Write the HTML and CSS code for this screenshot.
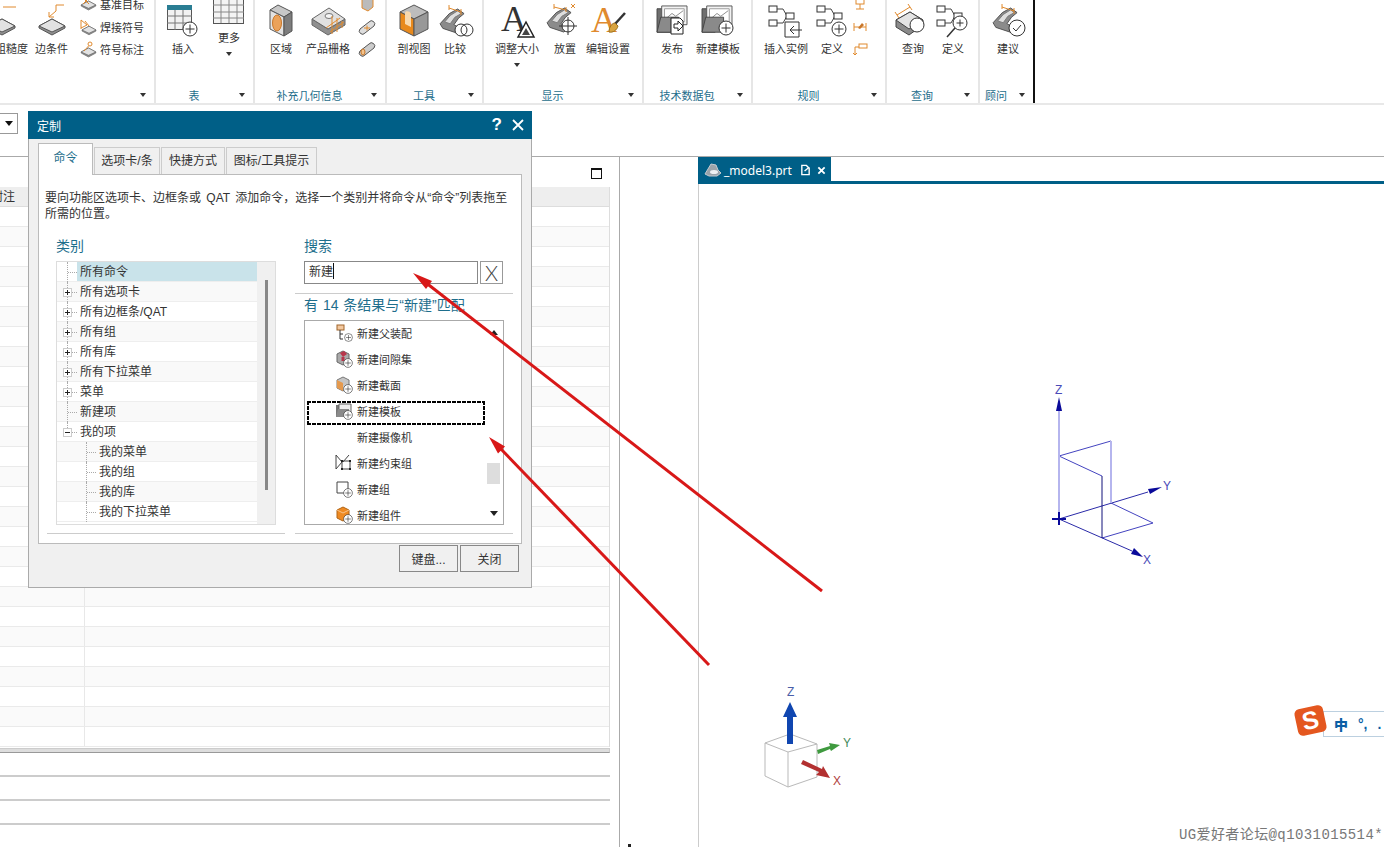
FILE: index.html
```html
<!DOCTYPE html>
<html lang="zh-CN">
<head>
    <meta charset="UTF-8">
    <title>定制 - NX</title>
    <link rel="stylesheet" href="styles.css">
</head>
<body>
<svg class="defs" width="0" height="0">
    <symbol id="plate" viewBox="0 0 26 16" overflow="visible">
        <path d="M0 7 13 0 26 7 26 9 13 16 0 9Z" fill="#8f8f8f" stroke="#555"/>
        <path d="M0 7 13 0 26 7 13 13Z" fill="#e2e2e2" stroke="#555"/>
    </symbol>
    <symbol id="plus" viewBox="0 0 16 16">
        <circle cx="8" cy="8" r="7" fill="#fff" stroke="#333"/>
        <path d="M8 3.500v9M3.500 8h9" stroke="#333"/>
    </symbol>
    <symbol id="bracket" viewBox="0 0 30 26" overflow="visible">
        <path d="M1 16 11 5 20 0 27 5 21 10 16 17 25 22 19 26 4 21Z" fill="#8b8b8b" stroke="#4d4d4d"/>
        <path d="M12 7 20 2 24 5 17 9 12 16 6 14Z" fill="#dedede" stroke="#777"/>
    </symbol>
    <symbol id="folder" viewBox="0 0 34 32">
        <path d="M1 4h8l2 3h4v22H1Z" fill="#6f6f6f" stroke="#444"/>
        <path d="M6 1h27v20H6Z" fill="#f2f2f2" stroke="#555"/>
        <path d="M9 4h21v14H9Z" fill="#fff" stroke="#999"/>
        <path d="M10 15 17 9 21 12 29 6" fill="none" stroke="#888"/>
        <path d="M1 29 5 13H24V29Z" fill="#8a8a8a" stroke="#444"/>
    </symbol>
    <symbol id="nodes" viewBox="0 0 32 30">
        <path d="M8 4h7l4 7h3M8 18h7l4-7" fill="none" stroke="#444"/>
        <rect x="1" y="1" width="8" height="6" fill="#fff" stroke="#333"/>
        <rect x="1" y="15" width="8" height="6" fill="#fff" stroke="#333"/>
        <rect x="18" y="8" width="8" height="6" fill="#fff" stroke="#333"/>
    </symbol>
</svg>

<div class="app">
    <div class="ribbon">
        <div class="rgroup g1">
            <div class="rtools">
                <div class="tool w23">
                    <svg class="ico" viewBox="0 0 40 40"><path d="M11 6h13" stroke="#e08a2e" fill="none"/><use href="#plate" x="-3" y="18" width="26" height="16"/></svg>
                    <span>粗糙度</span>
                </div>
                <div class="tool w57">
                    <svg class="ico" viewBox="0 0 40 40"><use href="#plate" x="7" y="18" width="26" height="16"/><path d="M32 4H24V10M24 10 17 16M17 11V16H22" stroke="#e08a2e" fill="none"/></svg>
                    <span>边条件</span>
                </div>
                <div class="smallcol">
                    <div class="smallitem"><svg class="sico" viewBox="0 0 16 16"><use href="#plate" x="1" y="5" width="15" height="9"/><path d="M3 2 9 8M9 2 3 8" stroke="#e08a2e"/></svg><span>基准目标</span></div>
                    <div class="smallitem"><svg class="sico" viewBox="0 0 16 16"><use href="#plate" x="2" y="7" width="14" height="9"/><path d="M1 1v9M1 1l6 5-6 3M5 2l4 5" stroke="#e08a2e" fill="none"/></svg><span>焊接符号</span></div>
                    <div class="smallitem"><svg class="sico" viewBox="0 0 16 16"><use href="#plate" x="1" y="7" width="15" height="9"/><circle cx="10" cy="3" r="2" fill="none" stroke="#e08a2e"/><path d="M8.500 5 4 10" stroke="#e08a2e"/></svg><span>符号标注</span></div>
                </div>
            </div>
            <div class="rfoot"><span class="rlabel"></span><i class="rarrow"></i></div>
        </div>

        <div class="rgroup g2">
            <div class="rtools">
                <div class="tool w46">
                    <svg class="ico" viewBox="0 0 40 40">
                        <rect x="4.500" y="4.500" width="24" height="24" fill="#f2f2f2" stroke="#555"/>
                        <rect x="4" y="4" width="25" height="5" fill="#2a7d93"/>
                        <path d="M4 15h25M4 22h25M12 9v20M20 9v20" stroke="#777"/>
                        <use href="#plus" x="19" y="20" width="16" height="16"/>
                    </svg>
                    <span>插入</span>
                </div>
                <div class="tool w46 more">
                    <svg class="ico ico-more" viewBox="0 0 40 30">
                        <rect x="4.500" y="-5" width="30" height="28.500" fill="#f4f4f4" stroke="#555"/>
                        <path d="M4 5h31M4 12h31M4 18h31M12 -5v28M20 -5v28M28 -5v28" stroke="#888"/>
                    </svg>
                    <span>更多</span>
                    <i class="rarrow"></i>
                </div>
            </div>
            <div class="rfoot"><span class="rlabel">表</span><i class="rarrow"></i></div>
        </div>

        <div class="rgroup g3">
            <div class="rtools">
                <div class="tool w46">
                    <svg class="ico" viewBox="0 0 40 40">
                        <path d="M9 9 17 4 31 11 23 16Z" fill="#c8c8c8" stroke="#555"/>
                        <path d="M9 9 23 16V35L9 28Z" fill="#e2e2e2" stroke="#555"/>
                        <path d="M23 16 31 11V30L23 35Z" fill="#7d7d7d" stroke="#555"/>
                        <ellipse cx="16" cy="22" rx="4.500" ry="8" fill="#eba25a" stroke="#c9772a"/>
                    </svg>
                    <span>区域</span>
                </div>
                <div class="tool w48">
                    <svg class="ico" viewBox="0 0 40 40">
                        <path d="M4 18V24L20 34 37 24V18L20 28Z" fill="#8f8f8f" stroke="#666"/>
                        <path d="M4 18 21 7 37 18 20 28Z" fill="#e0e0e0" stroke="#666"/>
                        <ellipse cx="21" cy="15" rx="4" ry="2.500" fill="#f5f5f5" stroke="#777"/>
                        <path d="M18 27 32 17M22 31 36 21M24 15V33M29 17V31M34 20V27" stroke="#e08a2e" fill="none"/>
                    </svg>
                    <span>产品栅格</span>
                </div>
                <div class="smallcol w30 iconly">
                    <div class="smallitem"><svg class="sico" viewBox="0 0 16 16"><path d="M3 3 9 0 14 3V11L9 15 3 12Z" fill="#bbb" stroke="#e08a2e"/></svg></div>
                    <div class="smallitem"><svg class="sico" viewBox="0 0 16 16"><path d="M1 10 10 3a3 3 0 0 1 5 4L6 14a3 3 0 0 1-5-4Z" fill="#ddd" stroke="#555"/><path d="M5 9h6M8 6.500v5" stroke="#e08a2e"/></svg></div>
                    <div class="smallitem"><svg class="sico" viewBox="0 0 16 16"><path d="M1 10 10 3a3 3 0 0 1 5 4L6 14a3 3 0 0 1-5-4Z" fill="#ccc" stroke="#555"/><ellipse cx="4" cy="11" rx="2" ry="3" fill="#f4c48c" stroke="#c9772a"/></svg></div>
                </div>
            </div>
            <div class="rfoot"><span class="rlabel">补充几何信息</span><i class="rarrow"></i></div>
        </div>

        <div class="rgroup g4">
            <div class="rtools">
                <div class="tool w48">
                    <svg class="ico" viewBox="0 0 40 40">
                        <path d="M6 11 20 4 34 11 20 18Z" fill="#bdbdbd" stroke="#555"/>
                        <path d="M6 11 20 18V35L6 28Z" fill="#e8891c" stroke="#555"/>
                        <path d="M20 18 34 11V28L20 35Z" fill="#989898" stroke="#555"/>
                        <path d="M11 12c0-3 6-2 6 1V26L11 23Z" fill="#f8d9ae"/>
                    </svg>
                    <span>剖视图</span>
                </div>
                <div class="tool w34">
                    <svg class="ico" viewBox="0 0 40 40">
                        <use href="#bracket" x="4" y="8" width="28" height="24"/>
                        <path d="M14 7 26 11M14 4V9M26 8V14" stroke="#e08a2e" fill="none"/>
                        <circle cx="26" cy="29" r="6" fill="#fff" stroke="#333"/>
                        <circle cx="32" cy="29" r="6" fill="none" stroke="#333"/>
                    </svg>
                    <span>比较</span>
                </div>
            </div>
            <div class="rfoot"><span class="rlabel">工具</span><i class="rarrow"></i></div>
        </div>

        <div class="rgroup g5">
            <div class="rtools">
                <div class="tool w50">
                    <svg class="ico" viewBox="0 0 40 40">
                        <text x="4" y="30" class="ico-a">A</text>
                        <path d="M29 21 37 36H21Z" fill="#fff" stroke="#222" stroke-width="1.500"/>
                        <path d="M29 27 33 34H25Z" fill="#444"/>
                    </svg>
                    <span>调整大小</span>
                    <i class="rarrow"></i>
                </div>
                <div class="tool w46">
                    <svg class="ico" viewBox="0 0 40 40">
                        <use href="#bracket" x="1" y="7" width="28" height="24"/>
                        <path d="M9 6 21 9M9 3V8M21 6V11M26 3l4 4M30 3l-4 4" stroke="#e08a2e" fill="none"/>
                        <circle cx="23" cy="25" r="6" fill="#fff" stroke="#333"/>
                        <path d="M23 16V34M14 25H32" stroke="#333"/>
                    </svg>
                    <span>放置</span>
                </div>
                <div class="tool w40">
                    <svg class="ico" viewBox="0 0 40 40">
                        <text x="3" y="31" class="ico-a orange">A</text>
                        <path d="M37 12 27 23" stroke="#333" stroke-width="2.500"/>
                        <path d="M27 22c-3 0-6 4-6 9 4 1 8-2 9-6Z" fill="#d9a441" stroke="#9b6e1c"/>
                    </svg>
                    <span>编辑设置</span>
                </div>
            </div>
            <div class="rfoot"><span class="rlabel">显示</span><i class="rarrow"></i></div>
        </div>

        <div class="rgroup g6">
            <div class="rtools">
                <div class="tool w46">
                    <svg class="ico" viewBox="0 0 40 40">
                        <use href="#folder" x="3" y="4" width="34" height="30"/>
                        <path d="M19 17h9l3 3v13H19Z" fill="#fff" stroke="#222"/>
                        <path d="M22 23h4v-3l5 5-5 5v-3h-4Z" fill="#fff" stroke="#222"/>
                    </svg>
                    <span>发布</span>
                </div>
                <div class="tool w46">
                    <svg class="ico" viewBox="0 0 40 40">
                        <use href="#folder" x="2" y="4" width="34" height="30"/>
                        <use href="#plus" x="20" y="19" width="16" height="16"/>
                    </svg>
                    <span>新建模板</span>
                </div>
            </div>
            <div class="rfoot"><span class="rlabel">技术数据包</span><i class="rarrow"></i></div>
        </div>

        <div class="rgroup g7">
            <div class="rtools">
                <div class="tool w50">
                    <svg class="ico" viewBox="0 0 40 40">
                        <use href="#nodes" x="2" y="4" width="32" height="30"/>
                        <path d="M19 21h14v15H19Z" fill="#fff" stroke="#333"/>
                        <path d="M36 29H24M28 25l-4 4 4 4" fill="none" stroke="#333"/>
                    </svg>
                    <span>插入实例</span>
                </div>
                <div class="tool w42">
                    <svg class="ico" viewBox="0 0 40 40">
                        <use href="#nodes" x="4" y="4" width="32" height="30"/>
                        <use href="#plus" x="19" y="20" width="16" height="16"/>
                    </svg>
                    <span>定义</span>
                </div>
                <div class="smallcol w14 iconly">
                    <div class="smallitem"><svg class="sico" viewBox="0 0 16 16"><rect x="4" y="1" width="8" height="7" fill="#fff" stroke="#e08a2e"/><path d="M8 8v5M4 13h8" stroke="#e08a2e"/></svg></div>
                    <div class="smallitem"><svg class="sico" viewBox="0 0 16 16"><path d="M2 4v8M14 4v8M2 8h12" stroke="#e08a2e"/><path d="M6 9 10 4 12 6 8 10Z" fill="#c9772a"/></svg></div>
                    <div class="smallitem"><svg class="sico" viewBox="0 0 16 16"><path d="M3 14V6H7M3 14l-2-2M3 14l2-2" stroke="#e08a2e" fill="none"/><rect x="7" y="3" width="8" height="4" fill="#fff" stroke="#e08a2e"/></svg></div>
                </div>
            </div>
            <div class="rfoot"><span class="rlabel">规则</span><i class="rarrow"></i></div>
        </div>

        <div class="rgroup g8">
            <div class="rtools">
                <div class="tool w40">
                    <svg class="ico" viewBox="0 0 40 40">
                        <path d="M3 19 17 11 30 19V24L16 34 3 26Z" fill="#8a8a8a" stroke="#444"/>
                        <path d="M3 19 17 11 30 19 16 28Z" fill="#e4e4e4" stroke="#444"/>
                        <path d="M4 14 17 6M2 11l4 6M15 3l4 6" stroke="#e08a2e" fill="none"/>
                        <circle cx="24" cy="24" r="7" fill="#fff" stroke="#333"/>
                    </svg>
                    <span>查询</span>
                </div>
                <div class="tool w40">
                    <svg class="ico" viewBox="0 0 40 40">
                        <use href="#nodes" x="3" y="4" width="32" height="30"/>
                        <circle cx="27" cy="22" r="7" fill="#fff" stroke="#333"/>
                        <path d="M27 18.500v7M23.500 22h7" stroke="#333"/>
                        <path d="M22 27 14 36" stroke="#333" stroke-width="1.500"/>
                    </svg>
                    <span>定义</span>
                </div>
            </div>
            <div class="rfoot"><span class="rlabel">查询</span><i class="rarrow"></i></div>
        </div>

        <div class="rgroup g9">
            <div class="rtools">
                <div class="tool w40">
                    <svg class="ico" viewBox="0 0 40 40">
                        <use href="#bracket" x="4" y="7" width="28" height="24"/>
                        <path d="M14 6 26 10M14 3V8M26 7V13" stroke="#e08a2e" fill="none"/>
                        <circle cx="29" cy="27" r="8" fill="#fff" stroke="#333"/>
                        <path d="M25 27l3 3 5-6" fill="none" stroke="#333"/>
                    </svg>
                    <span>建议</span>
                </div>
            </div>
            <div class="rfoot"><span class="rlabel">顾问</span><i class="rarrow"></i></div>
        </div>
    </div>

    <div class="strip">
        <div class="combo"><i class="rarrow"></i></div>
    </div>

    <div class="main">
        <div class="panel">
            <div class="panel-head"><span class="maxbox"></span></div>
            <div class="thead"><span class="th-note">附注</span></div>
            <div class="tbody">
                <div class="trow"><i></i></div><div class="trow"><i></i></div><div class="trow"><i></i></div>
                <div class="trow"><i></i></div><div class="trow"><i></i></div><div class="trow"><i></i></div>
                <div class="trow"><i></i></div><div class="trow"><i></i></div><div class="trow"><i></i></div>
                <div class="trow"><i></i></div><div class="trow"><i></i></div><div class="trow"><i></i></div>
                <div class="trow"><i></i></div><div class="trow"><i></i></div><div class="trow"><i></i></div>
                <div class="trow"><i></i></div><div class="trow"><i></i></div><div class="trow"><i></i></div>
                <div class="trow"><i></i></div><div class="trow"><i></i></div><div class="trow"><i></i></div>
                <div class="trow"><i></i></div><div class="trow"><i></i></div><div class="trow"><i></i></div>
                <div class="trow"><i></i></div><div class="trow"><i></i></div><div class="trow"><i></i></div>
            </div>
            <div class="splitter"></div>
            <div class="slot"></div>
            <div class="slot"></div>
            <div class="slot"></div>
        </div>
        <div class="gutter"></div>
        <div class="view">
            <div class="tabbar">
                <div class="parttab">
                    <svg class="parttab-ico" viewBox="0 0 18 16"><path d="M1 12 7 2 12 3 14 8 17 11 13 14H5Z" fill="#9aa3aa" stroke="#c4cad0"/><ellipse cx="10" cy="10" rx="4" ry="2" fill="#eef1f3"/></svg>
                    <span>_model3.prt</span>
                    <svg class="parttab-doc" viewBox="0 0 12 12"><path d="M2 1h5l3 3v7H2Z" fill="none" stroke="#fff" stroke-width="1.500"/><path d="M5 7l5-4" stroke="#fff" stroke-width="1.500"/></svg>
                    <svg class="parttab-x" viewBox="0 0 10 10"><path d="M1.500 1.500l7 7M8.500 1.500l-7 7" stroke="#fff" stroke-width="2"/></svg>
                </div>
            </div>
            <div class="viewbody"></div>
        </div>
    </div>

    <div class="dialog">
        <div class="dlg-title">
            <span class="dlg-name">定制</span>
            <span class="dlg-help">?</span>
            <svg class="dlg-x" viewBox="0 0 12 12"><path d="M1 1l10 10M11 1 1 11" stroke="#fff" stroke-width="1.800"/></svg>
        </div>
        <div class="dlg-body">
            <div class="tabs">
                <div class="tab active t55">命令</div>
                <div class="tab t66">选项卡/条</div>
                <div class="tab t64">快捷方式</div>
                <div class="tab t91">图标/工具提示</div>
            </div>
            <div class="pane">
                <p class="desc">要向功能区选项卡、边框条或 QAT 添加命令，选择一个类别并将命令从“命令”列表拖至<br>所需的位置。</p>
                <div class="cols">
                    <div class="col col-left">
                        <div class="col-label">类别</div>
                        <div class="tree">
                            <div class="tree-rows">
                                <div class="node selected"><span class="twig"></span><span class="node-text">所有命令</span></div>
                                <div class="node"><span class="twig"><svg class="exp" viewBox="0 0 9 9"><rect x=".5" y=".5" width="8" height="8" fill="#fff" stroke="#ccc"/><path d="M2 4.500h5M4.500 2v5" stroke="#222"/></svg></span><span class="node-text">所有选项卡</span></div>
                                <div class="node"><span class="twig"><svg class="exp" viewBox="0 0 9 9"><rect x=".5" y=".5" width="8" height="8" fill="#fff" stroke="#ccc"/><path d="M2 4.500h5M4.500 2v5" stroke="#222"/></svg></span><span class="node-text">所有边框条/QAT</span></div>
                                <div class="node"><span class="twig"><svg class="exp" viewBox="0 0 9 9"><rect x=".5" y=".5" width="8" height="8" fill="#fff" stroke="#ccc"/><path d="M2 4.500h5M4.500 2v5" stroke="#222"/></svg></span><span class="node-text">所有组</span></div>
                                <div class="node"><span class="twig"><svg class="exp" viewBox="0 0 9 9"><rect x=".5" y=".5" width="8" height="8" fill="#fff" stroke="#ccc"/><path d="M2 4.500h5M4.500 2v5" stroke="#222"/></svg></span><span class="node-text">所有库</span></div>
                                <div class="node"><span class="twig"><svg class="exp" viewBox="0 0 9 9"><rect x=".5" y=".5" width="8" height="8" fill="#fff" stroke="#ccc"/><path d="M2 4.500h5M4.500 2v5" stroke="#222"/></svg></span><span class="node-text">所有下拉菜单</span></div>
                                <div class="node"><span class="twig"><svg class="exp" viewBox="0 0 9 9"><rect x=".5" y=".5" width="8" height="8" fill="#fff" stroke="#ccc"/><path d="M2 4.500h5M4.500 2v5" stroke="#222"/></svg></span><span class="node-text">菜单</span></div>
                                <div class="node"><span class="twig"></span><span class="node-text">新建项</span></div>
                                <div class="node"><span class="twig twig-end"><svg class="exp" viewBox="0 0 9 9"><rect x=".5" y=".5" width="8" height="8" fill="#fff" stroke="#ccc"/><path d="M2 4.500h5" stroke="#222"/></svg></span><span class="node-text">我的项</span></div>
                                <div class="node sub"><span class="twig"></span><span class="node-text">我的菜单</span></div>
                                <div class="node sub"><span class="twig"></span><span class="node-text">我的组</span></div>
                                <div class="node sub"><span class="twig"></span><span class="node-text">我的库</span></div>
                                <div class="node sub"><span class="twig"></span><span class="node-text">我的下拉菜单</span></div>
                            </div>
                            <div class="tree-scroll"><div class="tree-thumb"></div></div>
                        </div>
                    </div>
                    <div class="col col-right">
                        <div class="col-label">搜索</div>
                        <div class="search">
                            <div class="search-input">新建<i class="caret"></i></div>
                            <div class="search-x">X</div>
                        </div>
                        <div class="rule"></div>
                        <div class="col-label result">有 14 条结果与“新建”匹配</div>
                        <div class="results">
                            <div class="result-rows">
                                <div class="item">
                                    <svg class="item-ico" viewBox="0 0 18 18"><rect x="2" y="1" width="7" height="5" fill="#f3c9a0" stroke="#a0652a"/><path d="M5 6v9h3M5 10h3" fill="none" stroke="#333"/><use href="#plus" x="9" y="9" width="9" height="9"/></svg>
                                    <span>新建父装配</span>
                                </div>
                                <div class="item">
                                    <svg class="item-ico" viewBox="0 0 18 18"><path d="M2 4 8 1 14 4V12L8 15 2 12Z" fill="#aaa" stroke="#666"/><path d="M5 3 9 1 12 4 8 7Z" fill="#b8354a"/><path d="M8 7V11" stroke="#b8354a" stroke-width="3"/><use href="#plus" x="8" y="8" width="10" height="10"/></svg>
                                    <span>新建间隙集</span>
                                </div>
                                <div class="item">
                                    <svg class="item-ico" viewBox="0 0 18 18"><path d="M2 4 8 1 14 4V12L8 15 2 12Z" fill="#c5c5c5" stroke="#777"/><path d="M2 4 8 7V15L2 12Z" fill="#e59a4e"/><use href="#plus" x="8" y="8" width="10" height="10"/></svg>
                                    <span>新建截面</span>
                                </div>
                                <div class="item focus">
                                    <svg class="item-ico" viewBox="0 0 18 18"><path d="M1 3h4l1 2H1ZM1 5h6v10H1Z" fill="#777"/><path d="M4 2h12v10H4Z" fill="#eee" stroke="#666"/><path d="M1 15 3 7H14V15Z" fill="#8a8a8a"/><use href="#plus" x="8" y="8" width="10" height="10"/></svg>
                                    <span>新建模板</span>
                                </div>
                                <div class="item">
                                    <span class="item-ico"></span>
                                    <span>新建摄像机</span>
                                </div>
                                <div class="item">
                                    <svg class="item-ico" viewBox="0 0 18 18"><path d="M1 1 7 8 1 15ZM14 1 8 8" fill="none" stroke="#444"/><path d="M7 7h8v8H7Z" fill="none" stroke="#444"/><rect x="6" y="6" width="2" height="2" fill="#222"/><rect x="14" y="14" width="2" height="2" fill="#222"/><rect x="14" y="6" width="2" height="2" fill="#222"/><rect x="6" y="14" width="2" height="2" fill="#222"/></svg>
                                    <span>新建约束组</span>
                                </div>
                                <div class="item">
                                    <svg class="item-ico" viewBox="0 0 18 18"><path d="M2 2h11v11H2Z" fill="none" stroke="#444"/><use href="#plus" x="8" y="8" width="10" height="10"/></svg>
                                    <span>新建组</span>
                                </div>
                                <div class="item">
                                    <svg class="item-ico" viewBox="0 0 18 18"><path d="M2 4 8 1 14 4V12L8 15 2 12Z" fill="#ee8a22" stroke="#b06416"/><path d="M2 4 8 7 14 4" fill="none" stroke="#f7c48c"/><use href="#plus" x="8" y="8" width="10" height="10"/></svg>
                                    <span>新建组件</span>
                                </div>
                            </div>
                            <div class="result-scroll">
                                <i class="tri-up"></i>
                                <div class="result-thumb"></div>
                                <i class="tri-down"></i>
                            </div>
                        </div>
                    </div>
                </div>
            </div>
            <div class="dlg-foot">
                <button class="btn">键盘...</button>
                <button class="btn">关闭</button>
            </div>
        </div>
    </div>

    <svg class="overlay" viewBox="0 0 1384 847">
        <!-- datum triad in the model view -->
        <g fill="none" stroke="#4444c0">
            <path d="M1059 456 1111 441M1059 456 1102 476M1111 503 1153 523 1102 538"/>
            <path d="M1059 519 1148 492M1059 519 1132 551" stroke="#2a2aa8"/>
            <path d="M1111 441V503" stroke="#b5b5ee" stroke-width="2"/>
            <path d="M1102 476V538" stroke="#10107a"/>
            <path d="M1059 519V405" stroke="#b5b5ee" stroke-width="2"/>
            <path d="M1052 519H1066M1059 512V525" stroke="#0a0a9a" stroke-width="2"/>
        </g>
        <path d="M1059 397 1062 411H1056Z" fill="#0a0a9a"/>
        <path d="M1148 489 1162 487 1150 494Z" fill="#0a0a9a"/>
        <path d="M1134 548 1143 557 1131 554Z" fill="#0a0a9a"/>
        <text x="1055" y="394" class="axis blue">Z</text>
        <text x="1163" y="490" class="axis blue">Y</text>
        <text x="1143" y="564" class="axis blue">X</text>

        <!-- corner triad -->
        <g fill="none" stroke="#b9b9b9">
            <path d="M765 743 790 734 817 744 788 752ZM765 743V776L788 787 817 777V744M788 752V787"/>
        </g>
        <path d="M787 744V717H783L790 702 797 717H793V744Z" fill="#1046b0"/>
        <path d="M817 750 830 746 829 743 840 745 831 751 830 749 818 754Z" fill="#3f9a3f"/>
        <path d="M801 764 803 760 822 769 823 766 830 778 816 775 819 772Z" fill="#b33030"/>
        <text x="787" y="696" class="axis tri-z">Z</text>
        <text x="843" y="747" class="axis tri-y">Y</text>
        <text x="833" y="785" class="axis tri-x">X</text>

        <!-- red annotation arrows -->
        <g stroke="#d81818" stroke-width="3" fill="none">
            <path d="M822 591 425 282"/>
            <path d="M709 665 499 447"/>
        </g>
        <path d="M413 273 426 289 432 281Z" fill="#d81818"/>
        <path d="M489 437 498 453.500 505 446.500Z" fill="#d81818"/>
    </svg>

    <div class="ime">
        <div class="ime-logo">S</div>
        <div class="ime-bar"><b>中</b><span>°,</span><span>.</span></div>
    </div>
    <div class="watermark">UG爱好者论坛@q1031015514*</div>
    <i class="corner-mark"></i>
    <i class="caret-bar"></i>
</div>
</body>
</html>
```

FILE: styles.css
```css
* {
    box-sizing: border-box;
}
body {
    margin: 0;
    background: #fff;
    color: #333;
    font-family: "Liberation Sans", "Noto Sans CJK SC", sans-serif;
    font-size: 12px;
}
.defs {
    position: absolute;
}
.app {
    position: relative;
    width: 1384px;
    height: 847px;
    overflow: hidden;
    background: #fff;
}

/* ribbon */
.ribbon {
    display: flex;
    height: 105px;
    border-bottom: 2px solid #e8e8e8;
}
.rgroup {
    display: flex;
    flex-direction: column;
    flex: none;
    border-right: 2px solid #e6e6e6;
}
.g1 { width: 156px; }
.g2 { width: 99px; }
.g3 { width: 132px; }
.g4 { width: 97px; }
.g5 { width: 160px; }
.g6 { width: 109px; }
.g7 { width: 134px; }
.g8 { width: 93px; }
.g9 { width: 53px; border-right: none; }
.g2 .rtools { padding-left: 4px; }
.g3 .rtools { padding-left: 3px; }
.g4 .rtools { padding-left: 3px; }
.g5 .rtools { padding-left: 8px; }
.g6 .rtools { padding-left: 5px; }
.g7 .rtools { padding-left: 8px; }
.g8 .rtools { padding-left: 6px; }
.g9 .rtools { padding-left: 8px; }
.rtools {
    display: flex;
    height: 86px;
}
.tool {
    display: flex;
    flex-direction: column;
    align-items: center;
    flex: none;
    font-size: 11px;
    line-height: 15px;
    white-space: nowrap;
}
.tool span {
    margin-top: 1px;
}
.tool .rarrow {
    margin-top: 6px;
}
.w23 { width: 23px; }
.w34 { width: 34px; }
.w40 { width: 40px; }
.w42 { width: 42px; }
.w46 { width: 46px; }
.w48 { width: 48px; }
.w50 { width: 50px; }
.w57 { width: 57px; }
.w14 { width: 14px; }
.w30 { width: 30px; }
.ico {
    flex: none;
    width: 40px;
    height: 40px;
    margin-top: 1px;
    overflow: visible;
}
.ico-more {
    height: 30px;
    margin-top: 0;
}
.ico-a {
    font-family: "Liberation Serif", serif;
    font-size: 36px;
    fill: #333;
}
.ico-a.orange {
    fill: #e08a2e;
}
.smallcol {
    display: flex;
    flex-direction: column;
    align-items: flex-start;
    margin-top: -7px;
    flex: none;
}
.smallcol.iconly {
    align-items: center;
}
.smallitem {
    display: flex;
    align-items: center;
    gap: 4px;
    height: 22.5px;
    font-size: 11px;
    white-space: nowrap;
}
.sico {
    width: 16px;
    height: 16px;
    flex: none;
    overflow: visible;
}
.rfoot {
    display: flex;
    align-items: center;
    height: 17px;
}
.rlabel {
    flex: 1;
    text-align: center;
    font-size: 11px;
    color: #1e6e8c;
    white-space: nowrap;
}
.rarrow {
    display: block;
    flex: none;
    width: 0;
    height: 0;
    border-left: 3px solid transparent;
    border-right: 3px solid transparent;
    border-top: 4px solid #333;
}
.rfoot .rarrow {
    margin: 0 8px 0 7px;
}

/* strip under the ribbon */
.strip {
    height: 52px;
    border-bottom: 1px solid #aaa;
    padding-top: 8px;
}
.combo {
    display: flex;
    align-items: center;
    justify-content: center;
    width: 19px;
    height: 21px;
    margin-left: -1px;
    border: 1px solid #999;
}
.combo .rarrow {
    border-left-width: 4px;
    border-right-width: 4px;
    border-top-width: 5px;
    border-top-color: #111;
}

/* main area */
.main {
    display: flex;
    height: 690px;
}
.panel {
    width: 610px;
    flex: none;
}
.panel-head {
    display: flex;
    justify-content: flex-end;
    height: 30px;
    padding: 11px 8px 0 0;
}
.maxbox {
    width: 11px;
    height: 11px;
    border: 1px solid #111;
    border-top-width: 2px;
}
.thead {
    height: 20px;
    background: #eee;
    border-bottom: 1px solid #ddd;
    line-height: 20px;
    font-size: 12px;
    border-right: 1px solid #ddd;
}
.th-note {
    display: block;
    margin-left: -9px;
}
.tbody {
    border-right: 1px solid #ddd;
}
.trow {
    display: flex;
    height: 20px;
    border-bottom: 1px solid #eaeaea;
}
.trow:nth-child(even) {
    background: #fafafa;
}
.trow i {
    width: 85px;
    border-right: 1px solid #e8e8e8;
}
.splitter {
    height: 5px;
    margin-top: 1px;
    background: #ddd;
    border: 1px solid #ccc;
    border-bottom-color: #999;
    border-left: none;
}
.slot {
    height: 24px;
    border-bottom: 2px solid #ccc;
}
.gutter {
    width: 10px;
    flex: none;
    border-right: 1px solid #aaa;
}
.view {
    display: flex;
    flex-direction: column;
    flex: 1;
    margin-left: 78px;
}
.tabbar {
    height: 27px;
    flex: none;
    border-bottom: 3px solid #005f87;
}
.parttab {
    display: flex;
    align-items: center;
    width: 133px;
    height: 26px;
    padding-left: 6px;
    background: #005f87;
    color: #fff;
    font-size: 12px;
    font-family: "Noto Sans", "Noto Sans CJK SC", sans-serif;
}
.parttab-ico {
    width: 18px;
    height: 16px;
    margin-right: 2px;
}
.parttab-doc {
    width: 11px;
    height: 12px;
    margin-left: 8px;
}
.parttab-x {
    width: 9px;
    height: 9px;
    margin-left: 6px;
}
.viewbody {
    flex: 1;
    border-left: 1px solid #ccc;
}

/* customize dialog */
.dialog {
    position: absolute;
    left: 28px;
    top: 111px;
    width: 504px;
    height: 477px;
    background: #f0f0f0;
    border: 1px solid #aaa;
    border-top: none;
}
.dlg-title {
    display: flex;
    align-items: center;
    height: 28px;
    margin: 0 -1px;
    padding-left: 9px;
    background: #005f87;
    color: #fff;
}
.dlg-name {
    flex: 1;
}
.dlg-help {
    font-family: "Liberation Sans", sans-serif;
    font-weight: bold;
    font-size: 17px;
    margin-right: 10px;
}
.dlg-x {
    width: 12px;
    height: 12px;
    margin-right: 8px;
}
.dlg-body {
    padding: 4px 9px 0;
}
.tabs {
    display: flex;
    align-items: flex-end;
    gap: 1px;
    height: 31px;
    position: relative;
    z-index: 1;
}
.tab {
    height: 27px;
    line-height: 26px;
    text-align: center;
    background: #f0f0f0;
    border: 1px solid #ccc;
    border-bottom: none;
}
.tab.active {
    height: 32px;
    margin-bottom: -1px;
    line-height: 28px;
    padding-bottom: 3px;
    background: #fff;
    color: #1e6e8c;
    border-color: #bbb;
}
.t55 { width: 55px; }
.t66 { width: 66px; }
.t64 { width: 64px; }
.t91 { width: 91px; }
.pane {
    height: 370px;
    background: #fff;
    border: 1px solid #bbb;
}
.desc {
    margin: 0;
    padding: 15px 6px 0;
    line-height: 16px;
    height: 47px;
    white-space: nowrap;
    word-spacing: 2px;
}
.cols {
    display: flex;
    gap: 10px;
    padding: 0 8px;
    margin-top: 16px;
}
.col {
    padding: 0 9px 8px;
    border-bottom: 1px solid #ccc;
}
.col-left { width: 238px; }
.col-right { width: 218px; }
.col-label {
    height: 18px;
    line-height: 17px;
    margin-bottom: 5px;
    font-size: 14px;
    color: #1e6e8c;
}
.col-label.result {
    margin-top: 3px;
    white-space: nowrap;
    word-spacing: 1px;
}
.tree {
    display: flex;
    height: 264px;
    border: 1px solid #ddd;
    overflow: hidden;
}
.tree-rows {
    width: 200px;
    flex: none;
}
.node {
    display: flex;
    height: 20px;
    line-height: 20px;
    background: #fff;
    border-bottom: 1px solid #eee;
    white-space: nowrap;
}
.node:nth-child(even) {
    background: #f9f9f9;
}
.node.selected .node-text {
    flex: 1;
    background: #c9e3ea;
}
.twig {
    position: relative;
    flex: none;
    width: 10px;
    height: 20px;
    margin-left: 10px;
    border-left: 1px dotted #aaa;
}
.twig::after {
    content: "";
    position: absolute;
    left: 0;
    top: 10px;
    width: 9px;
    border-top: 1px dotted #aaa;
}
.twig-end {
    height: 10px;
}
.exp {
    position: absolute;
    left: -5px;
    top: 6px;
    width: 9px;
    height: 9px;
    z-index: 1;
}
.node-text {
    padding-left: 3px;
}
.node.sub {
    padding-left: 19px;
}
.tree-scroll {
    flex: 1;
    padding: 18px 0 0 8px;
    background: #f0f0f0;
}
.tree-thumb {
    width: 3px;
    height: 210px;
    background: #888;
}
.search {
    display: flex;
    gap: 2px;
    height: 23px;
}
.search-input {
    flex: none;
    width: 174px;
    padding-left: 4px;
    line-height: 20px;
    border: 1px solid #888;
}
.caret {
    display: inline-block;
    width: 1px;
    height: 16px;
    vertical-align: -3px;
    background: #111;
}
.search-x {
    width: 23px;
    text-align: center;
    line-height: 22px;
    font-size: 21px;
    font-family: "Lato", "Liberation Sans", sans-serif;
    font-weight: 300;
    color: #444;
    border: 1px solid #999;
}
.rule {
    margin: 9px -9px 0;
    border-top: 1px solid #ccc;
}
.results {
    display: flex;
    height: 205px;
    border: 1px solid #aaa;
    overflow: hidden;
}
.result-rows {
    width: 180px;
    flex: none;
}
.item {
    position: relative;
    display: flex;
    align-items: center;
    height: 26px;
    padding-left: 30px;
    padding-bottom: 2px;
    font-size: 11px;
    white-space: nowrap;
}
.item-ico {
    display: block;
    flex: none;
    width: 18px;
    height: 18px;
    margin-right: 4px;
    overflow: visible;
}
.item.focus::after {
    content: "";
    position: absolute;
    left: 2px;
    top: 2px;
    right: 0;
    bottom: 0;
    background:
        repeating-linear-gradient(90deg, #000 0 4px, #fff 4px 5px) top / 100% 2px no-repeat,
        repeating-linear-gradient(90deg, #000 0 4px, #fff 4px 5px) bottom / 100% 2px no-repeat,
        repeating-linear-gradient(0deg, #000 0 4px, #fff 4px 5px) left / 2px 100% no-repeat,
        repeating-linear-gradient(0deg, #000 0 4px, #fff 4px 5px) right / 2px 100% no-repeat;
}
.result-scroll {
    display: flex;
    flex-direction: column;
    align-items: center;
    flex: 1;
    padding: 9px 3px 0 2px;
}
.tri-up, .tri-down {
    display: block;
    flex: none;
    width: 0;
    height: 0;
    border-left: 4px solid transparent;
    border-right: 4px solid transparent;
}
.tri-up { border-bottom: 5px solid #222; }
.tri-down { border-top: 5px solid #222; margin-top: 27px; }
.result-thumb {
    flex: none;
    width: 13px;
    height: 21px;
    margin-top: 128px;
    background: #ddd;
}
.dlg-foot {
    display: flex;
    justify-content: flex-end;
    gap: 2px;
    margin-top: 1px;
    padding-right: 3px;
}
.btn {
    width: 59px;
    height: 27px;
    padding: 0;
    background: #f0f0f0;
    border: 1px solid #888;
    color: #333;
    font: 12px "Liberation Sans", "Noto Sans CJK SC", sans-serif;
}

/* things lying over the page */
.overlay {
    position: absolute;
    left: 0;
    top: 0;
    width: 1384px;
    height: 847px;
    pointer-events: none;
}
.axis {
    font-family: "Liberation Sans", sans-serif;
    font-size: 12px;
}
.axis.blue { fill: #4a4ab8; }
.axis.tri-z { fill: #4a5ea8; }
.axis.tri-y { fill: #3f8a5a; }
.axis.tri-x { fill: #b04040; }
.ime {
    position: absolute;
    left: 1296px;
    top: 707px;
    display: flex;
    align-items: flex-start;
}
.ime-logo {
    position: relative;
    z-index: 1;
    width: 29px;
    height: 27px;
    border-radius: 5px;
    background: #e4571f;
    color: #fff;
    font: bold 25px/27px "Liberation Sans", sans-serif;
    text-align: center;
    transform: rotate(-12deg);
}
.ime-bar {
    display: flex;
    align-items: center;
    gap: 10px;
    width: 70px;
    height: 26px;
    margin: 4px 0 0 -2px;
    padding-left: 10px;
    background: #fff;
    border: 1px solid #bcd0e0;
    border-right: none;
    color: #0b5fa5;
    font-size: 14px;
    font-weight: bold;
}
.watermark {
    position: absolute;
    right: 1px;
    bottom: 3px;
    font: 14px/18px "Liberation Mono", "Noto Sans CJK SC", monospace;
    letter-spacing: .4px;
    color: #777;
    white-space: nowrap;
}
.corner-mark {
    position: absolute;
    left: 628px;
    top: 844px;
    width: 3px;
    height: 3px;
    background: #222;
}
.caret-bar {
    position: absolute;
    left: 1033px;
    top: 0;
    width: 2px;
    height: 103px;
    background: #111;
}
```
